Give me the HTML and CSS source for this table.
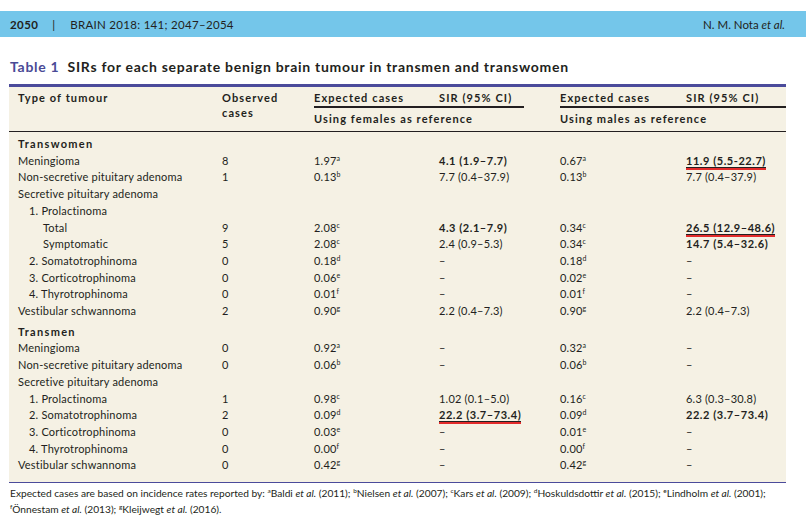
FILE: index.html
```html
<!DOCTYPE html>
<html lang="en">
<head>
<meta charset="utf-8">
<title>Table 1 SIRs</title>
<link rel="stylesheet" href="styles.css">
</head>
<body>
<header class="runhead">
  <div class="rh-left"><span class="pg">2050</span><span class="bar">|</span><span class="jn">BRAIN 2018: 141; 2047–2054</span></div>
  <div class="rh-right">N. M. Nota <i>et al.</i></div>
</header>

<h1 class="caption"><span class="tlabel">Table 1</span> SIRs for each separate benign brain tumour in transmen and transwomen</h1>

<table class="data">
  <colgroup>
    <col class="c1"><col class="c2"><col class="c3"><col class="c4"><col class="c5"><col class="c6">
  </colgroup>
  <thead>
    <tr class="h1">
      <th rowspan="2" class="first">Type of tumour</th>
      <th rowspan="2" class="obs">Observed<br>cases</th>
      <th>Expected cases</th>
      <th>SIR (95% CI)</th>
      <th>Expected cases</th>
      <th>SIR (95% CI)</th>
    </tr>
    <tr class="h2">
      <th colspan="2"><div class="grp grp-l">Using females as reference</div></th>
      <th colspan="2"><div class="grp">Using males as reference</div></th>
    </tr>
  </thead>
  <tbody>
    <tr class="sec"><td class="first" colspan="6"><b class="sh">Transwomen</b></td></tr>
    <tr><td class="first">Meningioma</td><td>8</td><td>1.97<sup>a</sup></td><td><b>4.1 (1.9–7.7)</b></td><td>0.67<sup>a</sup></td><td><b class="hl">11.9 (5.5-22.7)</b></td></tr>
    <tr><td class="first">Non-secretive pituitary adenoma</td><td>1</td><td>0.13<sup>b</sup></td><td>7.7 (0.4–37.9)</td><td>0.13<sup>b</sup></td><td>7.7 (0.4–37.9)</td></tr>
    <tr><td class="first" colspan="6">Secretive pituitary adenoma</td></tr>
    <tr><td class="first in1" colspan="6">1. Prolactinoma</td></tr>
    <tr><td class="first in2">Total</td><td>9</td><td>2.08<sup>c</sup></td><td><b>4.3 (2.1–7.9)</b></td><td>0.34<sup>c</sup></td><td><b class="hl">26.5 (12.9–48.6)</b></td></tr>
    <tr><td class="first in2">Symptomatic</td><td>5</td><td>2.08<sup>c</sup></td><td>2.4 (0.9–5.3)</td><td>0.34<sup>c</sup></td><td><b>14.7 (5.4–32.6)</b></td></tr>
    <tr><td class="first in1">2. Somatotrophinoma</td><td>0</td><td>0.18<sup>d</sup></td><td>–</td><td>0.18<sup>d</sup></td><td>–</td></tr>
    <tr><td class="first in1">3. Corticotrophinoma</td><td>0</td><td>0.06<sup>e</sup></td><td>–</td><td>0.02<sup>e</sup></td><td>–</td></tr>
    <tr><td class="first in1">4. Thyrotrophinoma</td><td>0</td><td>0.01<sup>f</sup></td><td>–</td><td>0.01<sup>f</sup></td><td>–</td></tr>
    <tr><td class="first">Vestibular schwannoma</td><td>2</td><td>0.90<sup>g</sup></td><td>2.2 (0.4–7.3)</td><td>0.90<sup>g</sup></td><td>2.2 (0.4–7.3)</td></tr>
    <tr class="sec"><td class="first" colspan="6"><b class="sh">Transmen</b></td></tr>
    <tr><td class="first">Meningioma</td><td>0</td><td>0.92<sup>a</sup></td><td>–</td><td>0.32<sup>a</sup></td><td>–</td></tr>
    <tr><td class="first">Non-secretive pituitary adenoma</td><td>0</td><td>0.06<sup>b</sup></td><td>–</td><td>0.06<sup>b</sup></td><td>–</td></tr>
    <tr><td class="first" colspan="6">Secretive pituitary adenoma</td></tr>
    <tr><td class="first in1">1. Prolactinoma</td><td>1</td><td>0.98<sup>c</sup></td><td>1.02 (0.1–5.0)</td><td>0.16<sup>c</sup></td><td>6.3 (0.3–30.8)</td></tr>
    <tr><td class="first in1">2. Somatotrophinoma</td><td>2</td><td>0.09<sup>d</sup></td><td><b class="hl">22.2 (3.7–73.4)</b></td><td>0.09<sup>d</sup></td><td><b>22.2 (3.7–73.4)</b></td></tr>
    <tr><td class="first in1">3. Corticotrophinoma</td><td>0</td><td>0.03<sup>e</sup></td><td>–</td><td>0.01<sup>e</sup></td><td>–</td></tr>
    <tr><td class="first in1">4. Thyrotrophinoma</td><td>0</td><td>0.00<sup>f</sup></td><td>–</td><td>0.00<sup>f</sup></td><td>–</td></tr>
    <tr class="last"><td class="first">Vestibular schwannoma</td><td>0</td><td>0.42<sup>g</sup></td><td>–</td><td>0.42<sup>g</sup></td><td>–</td></tr>
  </tbody>
</table>

<p class="foot">Expected cases are based on incidence rates reported by: <sup>a</sup>Baldi <i>et al.</i> (2011); <sup>b</sup>Nielsen <i>et al.</i> (2007); <sup>c</sup>Kars <i>et al.</i> (2009); <sup>d</sup>Hoskuldsdottir <i>et al.</i> (2015); <sup>e</sup>Lindholm <i>et al.</i> (2001); <sup>f</sup>Önnestam <i>et al.</i> (2013); <sup>g</sup>Kleijwegt <i>et al.</i> (2016).</p>
</body>
</html>
```
FILE: styles.css
```css
html, body {
  margin: 0;
  padding: 0;
  background: #ffffff;
}
body {
  font-family: "Lato", "Open Sans", sans-serif;
  color: #231f20;
  padding-top: 11px;
}
.runhead {
  height: 26px;
  background: #74c6ea;
  display: flex;
  align-items: center;
  justify-content: space-between;
  padding: 0 21px 0 10px;
  font-size: 11.5px;
}
.rh-left {
  display: flex;
  align-items: center;
}
.pg {
  font-weight: 700;
  letter-spacing: 0.4px;
}
.bar {
  margin: 0 15px 0 14px;
}
.jn {
  letter-spacing: 0.3px;
}
.caption {
  margin: 22px 0 0 10px;
  font-size: 14px;
  font-weight: 700;
  line-height: 16px;
  letter-spacing: 0.72px;
  color: #231f20;
}
.tlabel {
  color: #4a4a96;
  margin-right: 4px;
}
.data {
  margin: 9px 0 0 9px;
  width: 777px;
  table-layout: fixed;
  border-collapse: collapse;
  background: #f5f1e4;
  border-top: 3px solid #4b4b9b;
  border-bottom: 1px solid #4b4b9b;
  font-size: 11px;
}
.c1 { width: 213px; }
.c2 { width: 92px; }
.c3 { width: 125px; }
.c4 { width: 121px; }
.c5 { width: 126px; }
.c6 { width: 100px; }
th, td {
  padding: 0;
  text-align: left;
  vertical-align: top;
  white-space: nowrap;
}
th {
  font-weight: 700;
  letter-spacing: 1.1px;
}
.h1 th {
  padding-top: 3px;
  height: 16px;
  line-height: 15px;
}
.h2 th {
  padding: 0;
  height: 25px;
}
thead {
  border-bottom: 1px solid #231f20;
}
.grp {
  border-top: 2px solid #231f20;
  padding-top: 3px;
  line-height: 16px;
}
.grp-l {
  margin-right: 36px;
}
td.first, th.first {
  padding-left: 9px;
}
td.in1 { padding-left: 20px; }
td.in2 { padding-left: 34px; }
td {
  line-height: 16.7px;
  height: 16.7px;
  letter-spacing: 0.2px;
}
tr.sec td {
  padding-top: 4px;
}
tr.last td {
  padding-bottom: 8px;
}
b {
  font-weight: 700;
  letter-spacing: 0.55px;
}
b.sh {
  letter-spacing: 1.3px;
}
.hl {
  border-bottom: 1px solid #231f20;
  box-shadow: 0 2px 0 #e32b2b;
}
sup {
  font-size: 7px;
  line-height: 0;
  vertical-align: 4px;
  letter-spacing: 0;
}
.foot {
  margin: 2px 0 0 10px;
  font-size: 10.2px;
  line-height: 16px;
  width: 775px;
}
.foot sup {
  font-size: 6.5px;
}
```
